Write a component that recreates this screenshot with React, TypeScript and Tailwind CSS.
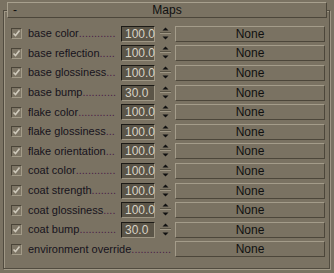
import React from "react";

const rows: { label: string; dots: number; value?: string }[] = [
  { label: "base color", dots: 12, value: "100.0" },
  { label: "base reflection", dots: 5, value: "100.0" },
  { label: "base glossiness", dots: 3, value: "100.0" },
  { label: "base bump", dots: 11, value: "30.0" },
  { label: "flake color", dots: 12, value: "100.0" },
  { label: "flake glossiness", dots: 3, value: "100.0" },
  { label: "flake orientation", dots: 3, value: "100.0" },
  { label: "coat color", dots: 13, value: "100.0" },
  { label: "coat strength", dots: 8, value: "100.0" },
  { label: "coat glossiness", dots: 4, value: "100.0" },
  { label: "coat bump", dots: 12, value: "30.0" },
  { label: "environment override", dots: 13 },
];

function Check() {
  return (
    <div className="w-[11px] h-[11px] shrink-0 border border-t-[#4a4438] border-l-[#4a4438] border-b-[#a39b88] border-r-[#a39b88] bg-[#7d7565] flex items-center justify-center">
      <svg width="9" height="9" viewBox="0 0 9 9">
        <path d="M1.5 4.5 L3.5 6.5 L7.5 1.5" stroke="#cfc9bb" strokeWidth="1.6" fill="none" />
      </svg>
    </div>
  );
}

function Spinner() {
  return (
    <div className="ml-[5px] w-[11px] h-[16px] shrink-0 flex flex-col">
      <div className="h-[7px] flex items-center justify-center border-b border-[#5a5446]">
        <svg width="7" height="4" viewBox="0 0 7 4">
          <path d="M0.5 3.5 L3.5 0.5 L6.5 3.5 Z" fill="#101010" />
        </svg>
      </div>
      <div className="h-[9px] flex items-center justify-center border-t border-[#9d9583]">
        <svg width="7" height="4" viewBox="0 0 7 4">
          <path d="M0.5 0.5 L3.5 3.5 L6.5 0.5 Z" fill="#101010" />
        </svg>
      </div>
    </div>
  );
}

export default function App() {
  return (
    <div
      className="w-[334px] h-[273px] bg-[#7a7262] overflow-hidden pt-[10px] pl-[3px]"
      style={{ fontFamily: '"Liberation Sans", Arial, sans-serif' }}
    >
      <div className="w-[327px] h-[259px] border border-[#514b3f] shadow-[inset_1px_1px_0_#a09886,1px_1px_0_#a09886] flex flex-col">
        <div className="-mt-[9px] ml-[3px] w-[320px] h-[16px] shrink-0 bg-[#7a7262] border border-t-[#a8a08e] border-l-[#a8a08e] border-b-[#4c463a] border-r-[#4c463a] flex items-center text-[12px] text-[#101010]">
          <span className="ml-[5px] w-[8px] leading-none">-</span>
          <span className="flex-1 text-center leading-none pr-[13px]">Maps</span>
        </div>
        <div className="mt-[6px] pl-[7px] flex flex-col">
          {rows.map((r) => (
            <div key={r.label} className="h-[19.6px] flex items-center">
              <Check />
              <div
                className={`ml-[6px] shrink-0 flex whitespace-nowrap text-[11px] leading-none ${
                  r.value ? "w-[89px]" : "w-[144px]"
                }`}
              >
                <span className="text-[#17121c]">{r.label}</span>
                <span className="text-[#4a1f48]">{".".repeat(r.dots)}</span>
              </div>
              {r.value && (
                <>
                  <div className="ml-[4px] w-[34px] h-[16px] shrink-0 bg-[#5b5548] border border-t-[#1c1a16] border-l-[#1c1a16] border-b-[#9e9684] border-r-[#9e9684] flex items-center pl-[3px] text-[12px] leading-none text-[#d8d2c4]">
                    {r.value}
                  </div>
                  <Spinner />
                </>
              )}
              <div
                className={`${r.value ? "ml-[4px]" : "ml-[3px]"} w-[150px] h-[16px] shrink-0 border border-t-[#a49c8a] border-l-[#a49c8a] border-b-[#4c463a] border-r-[#4c463a] flex items-center justify-center text-[12px] leading-none text-[#101010]`}
              >
                None
              </div>
            </div>
          ))}
        </div>
      </div>
    </div>
  );
}
